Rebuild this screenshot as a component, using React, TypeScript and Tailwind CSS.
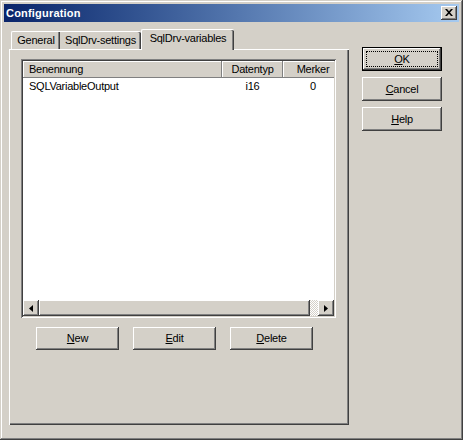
import React from "react";

const raised =
  "shadow-[inset_-1px_-1px_#404040,inset_1px_1px_#FFFFFF,inset_-2px_-2px_#808080]";

function Btn({ u, rest, w, def }: { u: string; rest: string; w: string; def?: boolean }) {
  if (def) {
    return (
      <div className={`${w} h-[24px] border border-black bg-[#D4D0C8] flex`}>
        <div className={`flex-1 flex p-[3px] ${raised}`}>
          <div className="flex-1 border border-dotted border-black flex items-center justify-center">
            <span>
              <u className="underline-offset-[1px]">{u}</u>
              {rest}
            </span>
          </div>
        </div>
      </div>
    );
  }
  return (
    <div className={`${w} h-[24px] bg-[#D4D0C8] flex items-center justify-center ${raised}`}>
      <span>
        <u className="underline-offset-[1px]">{u}</u>
        {rest}
      </span>
    </div>
  );
}

function SmallBtn({ u, rest }: { u: string; rest: string }) {
  return (
    <div className={`w-[83px] h-[23px] bg-[#D4D0C8] flex items-center justify-center ${raised}`}>
      <span>
        <u className="underline-offset-[1px]">{u}</u>
        {rest}
      </span>
    </div>
  );
}

export default function App() {
  return (
    <div className="w-[463px] h-[440px] bg-[#D4D0C8] p-[4px] flex flex-col text-[11px] tracking-[-0.25px] text-black font-['Liberation_Sans',Arial,sans-serif] leading-none shadow-[inset_-1px_-1px_#404040,inset_1px_1px_#D4D0C8,inset_-2px_-2px_#808080,inset_2px_2px_#FFFFFF]">
      {/* Title bar */}
      <div className="h-[18px] bg-linear-to-r from-[#0A246A] to-[#A6CAF0] flex items-center justify-between pl-[2px] pr-[2px]">
        <span className="text-white font-bold text-[11px] tracking-[0.2px]">Configuration</span>
        <div className={`w-[16px] h-[14px] bg-[#D4D0C8] flex items-center justify-center ${raised}`}>
          <svg width="8" height="7" viewBox="0 0 8 7" className="mb-[1px]">
            <path d="M0 0h2l2 2.3L6 0h2L5 3.5 8 7H6L4 4.7 2 7H0l3-3.5z" fill="#000" />
          </svg>
        </div>
      </div>

      {/* Body */}
      <div className="flex-1 flex">
        {/* Left: tab control */}
        <div className="ml-[5px] mt-[7px] flex flex-col">
          <div className="h-[20px] flex items-end pl-[2px] relative z-10">
            <div className="w-[49px] h-[18px] border-l border-t border-white rounded-tl-[2px] shadow-[inset_-1px_0_#404040,inset_-2px_0_#808080] flex items-center justify-center pb-[1px]">
              General
            </div>
            <div className="w-[81px] h-[18px] border-t border-white rounded-tr-[2px] shadow-[inset_-1px_0_#404040,inset_-2px_0_#808080] flex items-center justify-center pb-[1px]">
              SqlDrv-settings
            </div>
            <div className="w-[93px] h-[21px] -mb-px bg-[#D4D0C8] border-l border-t border-white rounded-t-[2px] shadow-[inset_-1px_0_#404040,inset_-2px_0_#808080] flex items-center justify-center pb-[3px]">
              SqlDrv-variables
            </div>
          </div>
          <div className="w-[340px] h-[376px] flex flex-col pl-[12px] pt-[10px] shadow-[inset_1px_1px_#FFFFFF,inset_-1px_-1px_#404040,inset_-2px_-2px_#808080]">
            {/* List view */}
            <div className="w-[315px] h-[259px] bg-white p-[2px] flex flex-col shadow-[inset_1px_1px_#808080,inset_-1px_-1px_#FFFFFF,inset_2px_2px_#404040,inset_-2px_-2px_#D4D0C8]">
              <div className="h-[17px] flex overflow-hidden shrink-0">
                <div className="w-[199px] shrink-0 h-full bg-[#D4D0C8] shadow-[inset_-1px_-1px_#808080,inset_1px_1px_#FFFFFF] flex items-center pl-[6px] pb-[1px]">
                  Benennung
                </div>
                <div className="w-[61px] shrink-0 h-full bg-[#D4D0C8] shadow-[inset_-1px_-1px_#808080,inset_1px_1px_#FFFFFF] flex items-center justify-center pb-[1px]">
                  Datentyp
                </div>
                <div className="w-[60px] shrink-0 h-full bg-[#D4D0C8] shadow-[inset_-1px_-1px_#808080,inset_1px_1px_#FFFFFF] flex items-center justify-center pb-[1px]">
                  Merker
                </div>
              </div>
              <div className="h-[17px] flex overflow-hidden shrink-0">
                <div className="w-[199px] shrink-0 flex items-center pl-[6px]">SQLVariableOutput</div>
                <div className="w-[61px] shrink-0 flex items-center justify-center">i16</div>
                <div className="w-[60px] shrink-0 flex items-center justify-center">0</div>
              </div>
              <div className="flex-1" />
              {/* Horizontal scrollbar */}
              <div className="h-[16px] flex shrink-0">
                <div className={`w-[16px] h-full bg-[#D4D0C8] flex items-center justify-center ${raised}`}>
                  <svg width="4" height="7" viewBox="0 0 4 7">
                    <path d="M4 0v7L0 3.5z" fill="#000" />
                  </svg>
                </div>
                <div className={`flex-1 h-full bg-[#D4D0C8] ${raised}`} />
                <div className="w-[8px] h-full bg-[repeating-conic-gradient(#FFFFFF_0_25%,#D4D0C8_0_50%)] bg-[length:2px_2px]" />
                <div className={`w-[16px] h-full bg-[#D4D0C8] flex items-center justify-center ${raised}`}>
                  <svg width="4" height="7" viewBox="0 0 4 7">
                    <path d="M0 0v7L4 3.5z" fill="#000" />
                  </svg>
                </div>
              </div>
            </div>
            {/* Buttons */}
            <div className="flex gap-[14px] ml-[15px] mt-[9px]">
              <SmallBtn u="N" rest="ew" />
              <SmallBtn u="E" rest="dit" />
              <SmallBtn u="D" rest="elete" />
            </div>
          </div>
        </div>

        {/* Right buttons */}
        <div className="ml-[13px] mt-[25px] flex flex-col gap-[6px]">
          <Btn u="O" rest="K" w="w-[80px]" def />
          <Btn u="C" rest="ancel" w="w-[80px]" />
          <Btn u="H" rest="elp" w="w-[80px]" />
        </div>
      </div>
    </div>
  );
}
